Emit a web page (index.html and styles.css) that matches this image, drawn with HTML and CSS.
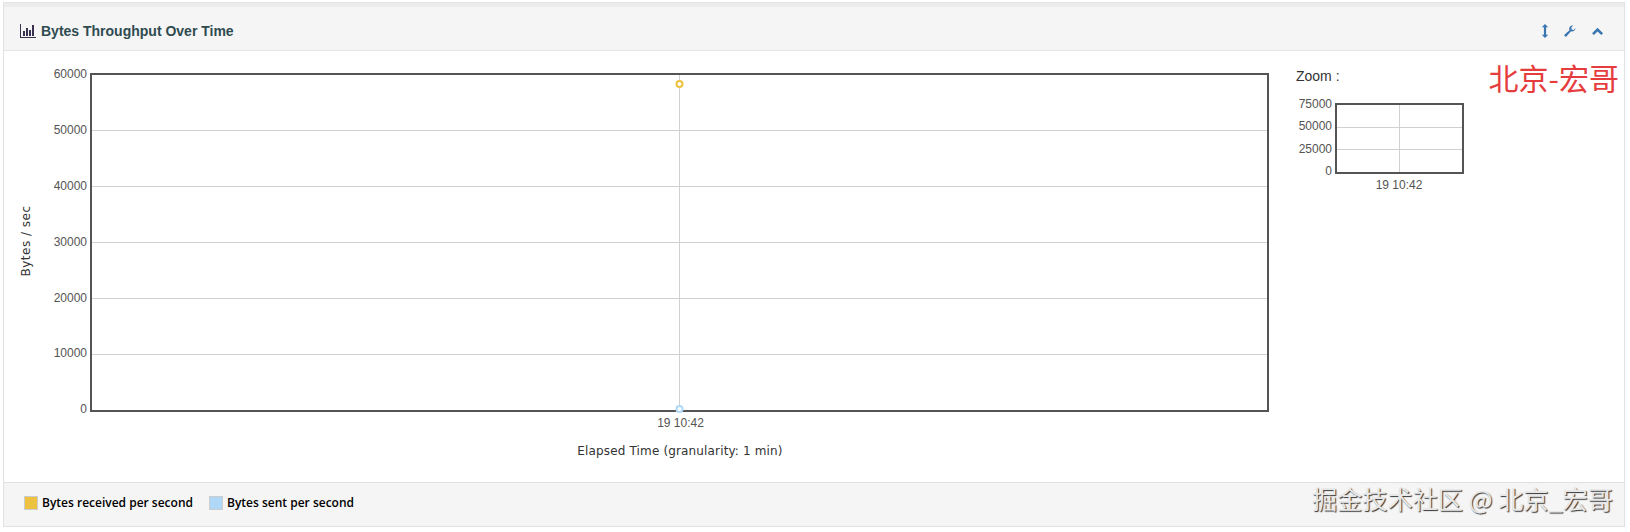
FILE: index.html
```html
<!DOCTYPE html>
<html lang="en">
<head>
<meta charset="utf-8">
<title>Bytes Throughput Over Time</title>
<link rel="stylesheet" href="styles.css">
</head>
<body>
<section class="panel">
  <header class="panel-head">
    <h2 class="panel-title">
      <svg class="icon-bars" viewBox="0 0 16 14" width="16" height="14" aria-hidden="true">
        <path d="M0 0h1v13h15v1H0z"/>
        <path d="M3 7h2v5H3zM6 4h2v8H6zM9 6h2v6H9zM12 1h2v11h-2z"/>
      </svg>
      Bytes Throughput Over Time
    </h2>
    <div class="panel-tools">
      <svg class="tool" viewBox="0 0 8 14" width="8" height="14" aria-hidden="true"><path d="M4 0l3.200 3.300H5.100v7.400h2.100L4 14 .8 10.700h2.100V3.300H.8z"/></svg>
      <svg class="tool" viewBox="0 0 14 14" width="12" height="12" aria-hidden="true"><path d="M13.400 3.600a3.900 3.900 0 0 1-5.200 3.700L3.300 12.800a1.500 1.500 0 1 1-2.200-2L6.400 6A3.900 3.900 0 0 1 10.700.6L8.500 2.900l.5 2.300 2.300.6z"/></svg>
      <svg class="tool" viewBox="0 0 14 10" width="13" height="9" aria-hidden="true"><path d="M7 .8l6.200 6.100-2 2L7 5 3 8.900l-2-2z"/></svg>
    </div>
  </header>

  <div class="panel-body">
    <svg class="main-chart" width="1272" height="431" viewBox="1 0 1272 431">
      <g class="grid">
        <path d="M88 79.500H1265M88 135.500H1265M88 191.500H1265M88 247.500H1265M88 303.500H1265"/>
        <path d="M676.500 22V360"/>
      </g>
      <rect class="frame" x="88" y="23" width="1177" height="337"/>
      <circle class="dot-received" cx="676.500" cy="33" r="3"/>
      <circle class="dot-sent" cx="676.500" cy="358" r="3"/>
      <g class="tick-y">
        <text x="84" y="27">60000</text>
        <text x="84" y="83">50000</text>
        <text x="84" y="139">40000</text>
        <text x="84" y="195">30000</text>
        <text x="84" y="251">20000</text>
        <text x="84" y="306">10000</text>
        <text x="84" y="362">0</text>
      </g>
      <text class="tick-x" x="677.500" y="376">19 10:42</text>
      <text class="axis-x" x="677" y="404">Elapsed Time (granularity: 1 min)</text>
      <text class="axis-y" transform="translate(27 190) rotate(-90)" x="0" y="0">Bytes / sec</text>
    </svg>

    <aside class="overview">
      <div class="zoom-label">Zoom :</div>
      <svg class="mini-chart" width="170" height="94" viewBox="0 0 170 94">
        <g class="grid">
          <path d="M47 30.500H174M47 52.500H174M110.500 7V76"/>
        </g>
        <rect class="frame" x="47" y="7" width="127" height="69"/>
        <g class="tick-y mini">
          <text x="43" y="11">75000</text>
          <text x="43" y="33">50000</text>
          <text x="43" y="56">25000</text>
          <text x="43" y="78">0</text>
        </g>
        <text class="tick-x mini" x="110" y="92">19 10:42</text>
      </svg>
    </aside>
  </div>

  <footer class="panel-foot">
    <span class="legend-item"><i class="swatch swatch-received"></i>Bytes received per second</span>
    <span class="legend-item"><i class="swatch swatch-sent"></i>Bytes sent per second</span>
  </footer>

  <div class="stamp-red">北京-宏哥</div>
  <div class="stamp-juejin">掘金技术社区 @ 北京_宏哥</div>
</section>
</body>
</html>
```

FILE: styles.css
```css
html, body {
  margin: 0;
  background: #fff;
}

body {
  padding: 2px 5px 0 3px;
  height: 530px;
  box-sizing: border-box;
  font-family: "Liberation Sans", Arial, sans-serif;
}

.panel {
  position: relative;
  height: 525px;
  box-sizing: border-box;
  border: 1px solid #e2e2e2;
  background: #fff;
  display: flex;
  flex-direction: column;
}

.panel-head {
  height: 48px;
  box-sizing: border-box;
  background: #f5f5f5;
  border-top: 4px solid #ececec;
  border-bottom: 1px solid #e4e4e4;
  display: flex;
  align-items: center;
  justify-content: space-between;
  padding: 6px 20px 0 16px;
}

.panel-title {
  margin: 0;
  font-size: 14px;
  font-weight: 700;
  color: #2f4b50;
  display: flex;
  align-items: center;
  gap: 5px;
}

.icon-bars {
  fill: #3a3050;
}

.panel-tools {
  display: flex;
  align-items: center;
  gap: 15px;
}

.tool {
  fill: #3a76b0;
}

.panel-body {
  flex: 1;
  display: flex;
}

.main-chart {
  display: block;
  flex: none;
}

.grid path {
  fill: none;
  stroke: #d0d0d0;
  stroke-width: 1;
}

.frame {
  fill: none;
  stroke: #545454;
  stroke-width: 2;
}

.dot-received {
  fill: #fff;
  stroke: #edc240;
  stroke-width: 2;
}

.dot-sent {
  fill: #fff;
  stroke: #afd8f8;
  stroke-width: 2;
}

.tick-y text {
  font-size: 12px;
  fill: #545454;
  text-anchor: end;
}

.tick-x {
  font-size: 12px;
  fill: #545454;
  text-anchor: middle;
}

.axis-x {
  font-family: "DejaVu Sans", Verdana, sans-serif;
  font-size: 12px;
  letter-spacing: 0.15px;
  fill: #333;
  text-anchor: middle;
}

.axis-y {
  font-family: "DejaVu Sans", Verdana, sans-serif;
  font-size: 12px;
  fill: #333;
  text-anchor: middle;
  letter-spacing: 0.5px;
}

.overview {
  flex: none;
  padding: 15px 0 0 20px;
}

.zoom-label {
  font-size: 14px;
  color: #333;
  line-height: 20px;
}

.mini-chart {
  display: block;
  margin: 11px 0 0 -7px;
  overflow: visible;
}

.panel-foot {
  height: 45px;
  box-sizing: border-box;
  background: #f5f5f5;
  border-top: 1px solid #e0e0e0;
  display: flex;
  align-items: center;
  gap: 16px;
  padding: 0 0 3px 20px;
}

.legend-item {
  font-family: "Open Sans", sans-serif;
  font-size: 12px;
  font-weight: 600;
  color: #000;
  display: flex;
  align-items: center;
  gap: 4px;
}

.swatch {
  width: 12px;
  height: 12px;
  border: 1px solid #ccc;
  display: block;
}

.swatch-received { background: #edc240; }
.swatch-sent { background: #afd8f8; }

.stamp-red {
  position: absolute;
  right: 5px;
  top: 54px;
  font-family: "Noto Sans CJK SC", sans-serif;
  font-size: 30px;
  line-height: 40px;
  color: #e53d3d;
}

.stamp-juejin {
  position: absolute;
  right: 11px;
  bottom: 13px;
  font-family: "Noto Sans CJK SC", sans-serif;
  font-size: 25.200px;
  line-height: 30px;
  color: #e8e8e8;
  text-shadow: 1px 1px 1px #333;
}
```
